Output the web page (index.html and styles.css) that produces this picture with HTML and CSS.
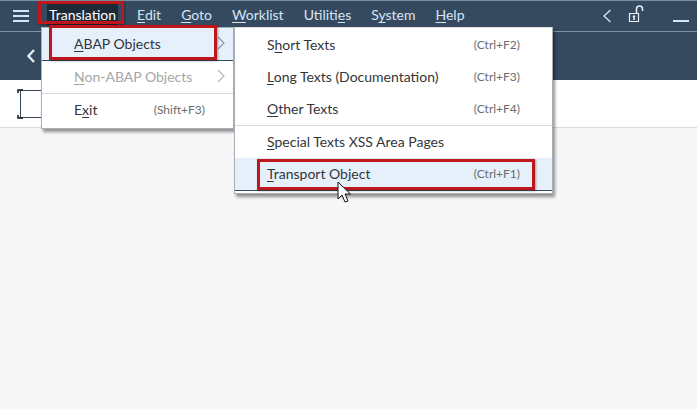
FILE: index.html
```html
<!DOCTYPE html>
<html lang="en">
<head>
<meta charset="utf-8">
<title>Translation menu</title>
<link rel="stylesheet" href="styles.css">
</head>
<body>
<div class="page">
  <header class="menubar">
    <svg class="hamburger" width="16" height="12" viewBox="0 0 16 12"><path d="M0 1h16M0 6h16M0 11h16" stroke="#d5e6f7" stroke-width="2"/></svg>
    <nav class="menus">
      <span class="menu active"><u>T</u>ranslation</span>
      <span class="menu"><u>E</u>dit</span>
      <span class="menu"><u>G</u>oto</span>
      <span class="menu"><u>W</u>orklist</span>
      <span class="menu">Utiliti<u>e</u>s</span>
      <span class="menu">S<u>y</u>stem</span>
      <span class="menu"><u>H</u>elp</span>
    </nav>
    <div class="tools">
      <svg width="10" height="14" viewBox="0 0 10 14"><path d="M8.500 1L2 7l6.500 6" fill="none" stroke="#d5e6f7" stroke-width="1.300"/></svg>
      <svg class="lock" width="17" height="18" viewBox="0 0 17 18"><path d="M1.500 8.500h9v8h-9z" fill="none" stroke="#e6eef6" stroke-width="1.200"/><circle cx="6" cy="11.500" r="1.300" fill="#e6eef6"/><path d="M5 15l.5-3h1l.5 3z" fill="#e6eef6"/><path d="M8.500 8V4a3 3 0 0 1 6 0v2" fill="none" stroke="#e6eef6" stroke-width="1.500"/></svg>
      <span class="minimize"></span>
    </div>
  </header>
  <div class="titlebar">
    <svg width="10" height="16" viewBox="0 0 10 16"><path d="M8 2L2.500 8 8 14" fill="none" stroke="#e6eef6" stroke-width="2.400"/></svg>
  </div>
  <div class="toolbar">
    <div class="field">
      <svg class="brackets" width="60" height="30" viewBox="0 0 60 30"><path d="M6 1H1v3M1 26v3h5" fill="none" stroke="#111" stroke-width="1.500"/></svg>
    </div>
  </div>
  <main class="content"></main>

  <div class="dropdown first">
    <div class="item focused"><span><u>A</u>BAP Objects</span><svg class="chev" width="8" height="14" viewBox="0 0 8 14"><path d="M1 1l6 6-6 6" fill="none" stroke="#8a96a3" stroke-width="1.100"/></svg></div>
    <div class="item disabled"><span><u>N</u>on-ABAP Objects</span><svg class="chev" width="8" height="14" viewBox="0 0 8 14"><path d="M1 1l6 6-6 6" fill="none" stroke="#b5b5b5" stroke-width="1.100"/></svg></div>
    <div class="item divided"><span>E<u>x</u>it</span><span class="key">(Shift+F3)</span></div>
  </div>

  <div class="dropdown second">
    <div class="item"><span>S<u>h</u>ort Texts</span><span class="key">(Ctrl+F2)</span></div>
    <div class="item"><span><u>L</u>ong Texts (Documentation)</span><span class="key">(Ctrl+F3)</span></div>
    <div class="item"><span><u>O</u>ther Texts</span><span class="key">(Ctrl+F4)</span></div>
    <div class="item divided"><span><u>S</u>pecial Texts XSS Area Pages</span></div>
    <div class="item focused"><span><u>T</u>ransport Object</span><span class="key">(Ctrl+F1)</span></div>
  </div>

  <div class="mark mark-translation"></div>
  <div class="mark mark-abap"></div>
  <div class="mark mark-transport"></div>

  <svg class="cursor" width="16" height="24" viewBox="0 0 16 24"><path d="M1 1v17l4-4 3 7 3-1-3-7h5.500z" fill="#fff" stroke="#111" stroke-width="1"/></svg>
</div>
</body>
</html>
```
FILE: styles.css
```css
* { box-sizing: border-box; }
html, body { margin: 0; height: 100%; }
body { font-family: "Lato", "Open Sans", sans-serif; font-size: 14px; color: #32363a; }
.page { position: relative; width: 697px; height: 409px; overflow: hidden; display: flex; flex-direction: column; background: #f7f7f7; }
u { text-decoration-thickness: 1px; text-underline-offset: 2px; }

.menubar { height: 32px; flex: none; display: flex; align-items: center; background: #354a5f; border-top: 1px solid #7a8b9c; border-bottom: 1px solid #7f93a6; padding-left: 13px; }
.hamburger { flex: none; }
.menus { display: flex; margin-left: 20px; margin-bottom: 2px; color: #d5e6f7; }
.menu { white-space: nowrap; margin-right: 20px; line-height: 18px; }
.menu.active { color: #fff; margin-right: 21px; background: #1d2b39; box-shadow: 0 0 0 2px #1d2b39; }
.tools { margin-left: auto; display: flex; align-items: center; padding-right: 8px; }
.lock { margin: -4px 0 0 16px; }
.minimize { width: 16px; height: 2px; background: #d5e6f7; margin: 10px 0 0 28px; }

.titlebar { height: 48px; flex: none; background: #354a5f; display: flex; align-items: center; padding-left: 26px; }
.toolbar { height: 48px; flex: none; background: #fff; border-bottom: 1px solid #d9d9d9; padding: 9px 0 0 17px; }
.field { width: 60px; height: 30px; position: relative; background: linear-gradient(#354a5f, #354a5f) 3px 1px / 40px 1px no-repeat, linear-gradient(#354a5f, #354a5f) 3px 28px / 40px 1px no-repeat, linear-gradient(#354a5f, #354a5f) 3px 1px / 1px 28px no-repeat; }
.brackets { display: block; }
.content { flex: 1; }

.dropdown { position: absolute; top: 27px; background: #fff; border: 1px solid #a9afb6; box-shadow: 2px 3px 3px rgba(0,0,0,.42); }
.dropdown.first { left: 41px; width: 193px; height: 102px; }
.dropdown.second { left: 234px; width: 319px; height: 167px; padding-top: 1px; border-top-color: #dfe3e7; }
.item { height: 32px; padding-bottom: 2px; display: flex; align-items: center; justify-content: space-between; white-space: nowrap; }
.first .item { padding-left: 32px; padding-right: 8px; }
.second .item { padding-left: 32px; padding-right: 32px; }
.item.focused { background: #e5f0fa; border-bottom: 1px solid #354a5f; height: 33px; }
.second .item.focused { padding-top: 1px; }
.item.divided { border-top: 1px solid #d9d9d9; height: 33px; }
.item.disabled { color: #a6a6a6; height: 32px; }
.key { font-size: 12px; color: #6a6d70; }
.first .key { margin-right: 20px; }
.chev { flex: none; }

.mark { position: absolute; border: 3px solid #bf161d; box-shadow: 1px 1px 2px rgba(0,0,0,.35); }
.mark-translation { left: 38px; top: 1px; width: 86px; height: 23px; }
.mark-abap { left: 49px; top: 25px; width: 168px; height: 35px; }
.mark-transport { left: 257px; top: 159px; width: 278px; height: 31px; }
.cursor { position: absolute; left: 337px; top: 181px; }
```
